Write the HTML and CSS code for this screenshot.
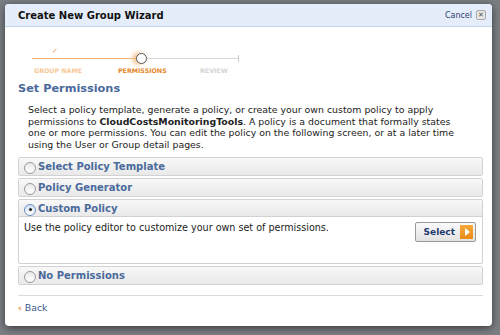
FILE: index.html
```html
<!DOCTYPE html>
<html lang="en">
<head>
    <meta charset="UTF-8">
    <title>Create New Group Wizard</title>
    <link rel="stylesheet" href="styles.css">
</head>
<body>
    <div class="backdrop">
        <div class="wizard">
            <div class="wizard-header">
                <h1>Create New Group Wizard</h1>
                <a class="cancel" href="#">Cancel <span class="close-box">&#x2715;</span></a>
            </div>

            <div class="wizard-body">
                <div class="steps">
                    <div class="track">
                        <div class="seg done"><span class="tick">&#x2713;</span></div>
                        <div class="dot"></div>
                        <div class="seg todo"></div>
                        <div class="end"></div>
                    </div>
                    <div class="step-labels">
                        <span class="lbl done">Group Name</span>
                        <span class="lbl current">Permissions</span>
                        <span class="lbl todo">Review</span>
                    </div>
                </div>

                <h2>Set Permissions</h2>
                <p class="intro">Select a policy template, generate a policy, or create your own custom policy to apply permissions to <b>CloudCostsMonitoringTools</b>. A policy is a document that formally states one or more permissions. You can edit the policy on the following screen, or at a later time using the User or Group detail pages.</p>

                <div class="options">
                    <div class="option">
                        <div class="option-head"><span class="radio"></span>Select Policy Template</div>
                    </div>
                    <div class="option">
                        <div class="option-head"><span class="radio"></span>Policy Generator</div>
                    </div>
                    <div class="option open">
                        <div class="option-head"><span class="radio checked"></span>Custom Policy</div>
                        <div class="option-body">
                            <span>Use the policy editor to customize your own set of permissions.</span>
                            <button class="select-btn">Select <span class="go"></span></button>
                        </div>
                    </div>
                    <div class="option">
                        <div class="option-head"><span class="radio"></span>No Permissions</div>
                    </div>
                </div>

                <div class="footer">
                    <a class="back" href="#"><span class="chev">&lsaquo;</span> Back</a>
                </div>
            </div>
        </div>
    </div>
</body>
</html>
```

FILE: styles.css
```css
* {
    margin: 0;
    padding: 0;
    box-sizing: border-box;
}

body {
    background: #7b7f84;
    font-family: 'DejaVu Sans', Verdana, sans-serif;
    width: 500px;
    height: 335px;
    overflow: hidden;
}

.backdrop {
    padding: 4px 8px 0 5px;
}

.wizard {
    background: #ffffff;
    border-radius: 4px;
    box-shadow: 0 2px 8px rgba(0,0,0,0.55);
    height: 322px;
    overflow: hidden;
}

.wizard-header {
    display: flex;
    align-items: center;
    justify-content: space-between;
    height: 23px;
    padding: 0 6px 0 13px;
    background: #e4edf9;
    border-bottom: 1px solid #c3d3e8;
}

h1 {
    font-size: 10px;
    font-weight: bold;
    color: #111;
}

.cancel {
    display: flex;
    align-items: center;
    gap: 4px;
    font-size: 8px;
    color: #2f3f70;
    text-decoration: none;
}

.close-box {
    display: inline-flex;
    align-items: center;
    justify-content: center;
    width: 10px;
    height: 10px;
    background: #e6e6e6;
    border: 1px solid #aaa;
    border-radius: 2px;
    font-size: 7px;
    font-weight: bold;
    color: #555;
}

.wizard-body {
    padding: 0 9px 0 13px;
}

/* progress steps */
.steps {
    padding: 25px 0 0 14px;
}

.track {
    display: flex;
    align-items: center;
    width: 207px;
    height: 12px;
}

.seg {
    height: 1px;
    position: relative;
}

.seg.done {
    width: 104px;
    background: #f3b67a;
}

.seg.todo {
    flex: 1;
    background: #d6d6d6;
}

.tick {
    position: absolute;
    left: 20px;
    top: -11px;
    font-size: 7px;
    color: #f0a55c;
}

.dot {
    width: 11px;
    height: 11px;
    border-radius: 50%;
    border: 1.5px solid #555;
    background: #fff;
    box-shadow: -3px 0 5px rgba(240,150,60,0.7);
}

.end {
    width: 1px;
    height: 7px;
    background: #c9c9c9;
}

.step-labels {
    display: flex;
    margin-top: 3px;
    padding-left: 2px;
    font-size: 6.3px;
    font-weight: bold;
    text-transform: uppercase;
}

.lbl.done {
    width: 84px;
    color: #f6c896;
}

.lbl.current {
    width: 82px;
    color: #e8872b;
}

.lbl.todo {
    color: #d3d3d3;
}

h2 {
    margin-top: 8px;
    font-size: 11.3px;
    font-weight: bold;
    color: #4a6a9b;
}

.intro {
    margin: 9px 14px 0 10px;
    font-size: 9.4px;
    line-height: 11.5px;
    color: #222;
}

/* permission options */
.options {
    margin-top: 7px;
    display: flex;
    flex-direction: column;
    gap: 2px;
}

.option {
    border: 1px solid #d2d2d2;
    border-radius: 2px;
}

.option-head {
    display: flex;
    align-items: center;
    gap: 2px;
    height: 17px;
    padding-left: 5px;
    background: linear-gradient(#f8f8f8, #e9e9e9);
    font-size: 10px;
    font-weight: bold;
    color: #4a6a9b;
}

.radio {
    width: 12px;
    height: 12px;
    border-radius: 50%;
    border: 1px solid #9a9a9a;
    background: linear-gradient(#e8e8e8, #fff);
    display: inline-flex;
    align-items: center;
    justify-content: center;
    margin-top: 3px;
}

.radio.checked::after {
    content: "";
    width: 3px;
    height: 3px;
    border-radius: 50%;
    background: #222;
}

.radio.checked {
    border-color: #6a8fc4;
    background: linear-gradient(#cfe0f5, #fff);
}

.option.open .option-head {
    border-bottom: 1px solid #d2d2d2;
}

.option-body {
    display: flex;
    justify-content: space-between;
    align-items: flex-start;
    height: 46px;
    padding: 5px 6px 0 5px;
    font-size: 9.6px;
    color: #222;
}

.select-btn {
    display: flex;
    align-items: center;
    gap: 5px;
    height: 20px;
    padding: 0 2px 0 8px;
    border: 1px solid #999;
    border-radius: 2px;
    background: linear-gradient(#fafafa, #e2e2e2);
    font-family: 'DejaVu Sans', Verdana, sans-serif;
    font-size: 9px;
    font-weight: bold;
    color: #1f3a6e;
}

.go {
    position: relative;
    width: 13px;
    height: 14px;
    background: linear-gradient(#f7a93a, #ea8b14);
    border-radius: 1px;
}

.go::after {
    content: "";
    position: absolute;
    left: 5px;
    top: 3px;
    border-left: 5px solid #fff;
    border-top: 4px solid transparent;
    border-bottom: 4px solid transparent;
}

.footer {
    margin-top: 10px;
    border-top: 1px solid #dcdcdc;
    padding-top: 0;
}

.back {
    font-size: 9.4px;
    color: #3a5a91;
    text-decoration: none;
}

.chev {
    color: #e8872b;
    font-size: 9px;
    font-weight: bold;
}
```
